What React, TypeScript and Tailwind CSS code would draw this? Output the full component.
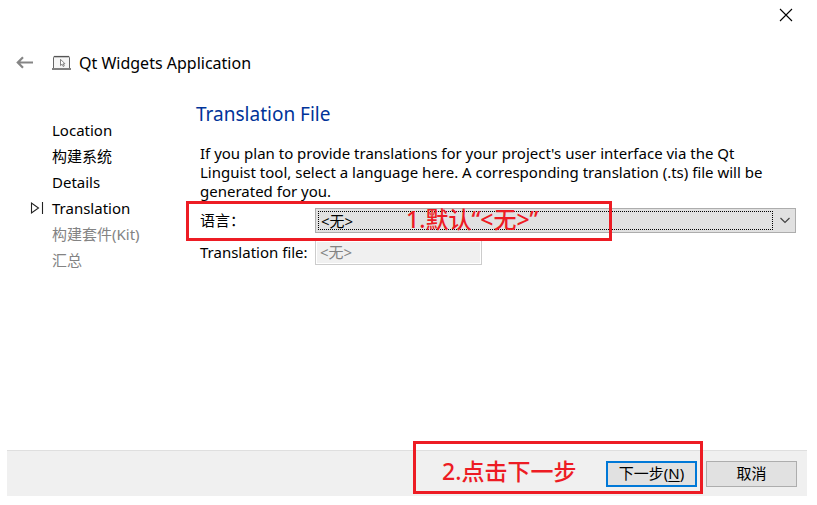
import React from "react";

type StepState = "done" | "current" | "pending";

const steps: { label: string; state: StepState }[] = [
  { label: "Location", state: "done" },
  { label: "构建系统", state: "done" },
  { label: "Details", state: "done" },
  { label: "Translation", state: "current" },
  { label: "构建套件(Kit)", state: "pending" },
  { label: "汇总", state: "pending" },
];

function Header() {
  return (
    <header>
      <div className="flex h-[30px] items-center justify-end pr-[14px]">
        <button type="button" aria-label="关闭" className="flex h-[14px] w-[14px] items-center justify-center">
          <svg width="14" height="14" viewBox="0 0 14 14" fill="none" stroke="#000" strokeWidth="1.1">
            <path d="M1 1 13 13M13 1 1 13" />
          </svg>
        </button>
      </div>
      <div className="mt-[23px] flex h-5 items-center pl-[9px]">
        <button type="button" aria-label="返回" className="h-5 w-5">
          <svg width="20" height="20" viewBox="0 0 20 20" fill="none" stroke="#858585" strokeWidth="2.2">
            <path d="M17 9.5H2M7 4.3 1.8 9.5 7 14.7" />
          </svg>
        </button>
        <svg className="ml-4" width="20" height="20" viewBox="0 0 20 20" fill="none">
          <path d="M1.5 15V4.5Q1.5 3.5 2.5 3.5H16.5Q17.5 3.5 17.5 4.5V15" fill="#f6f6f6" stroke="#666" />
          <path d="M2 3.6H17" stroke="#555" strokeWidth="1.4" />
          <path d="M0 16H19" stroke="#808080" strokeWidth="2" />
          <path d="M8.5 6.3V12.6L10.1 11.2 11.3 13.6 12.3 13 11.2 10.8H13Z" fill="#fff" stroke="#777" strokeWidth=".9" />
        </svg>
        <h1 className="ml-[7px] text-base leading-5">Qt Widgets Application</h1>
      </div>
    </header>
  );
}

function StepList() {
  return (
    <nav className="w-[189px] shrink-0 pt-11">
      <ol>
        {steps.map((step) => (
          <li
            key={step.label}
            aria-current={step.state === "current" ? "step" : undefined}
            className={step.state === "pending" ? "flex h-[26px] items-center text-[#838383]" : "flex h-[26px] items-center"}
          >
            <span className="flex w-[45px] pl-[23px]">
              {step.state === "current" && (
                <svg width="14" height="14" viewBox="0 0 14 14" fill="none" stroke="#222">
                  <path d="M1.5 2V12L8.5 7ZM12.5 1V13" strokeWidth="1.1" />
                </svg>
              )}
            </span>
            {step.label}
          </li>
        ))}
      </ol>
    </nav>
  );
}

function TranslationPage() {
  return (
    <section className="min-w-0 flex-1 pr-[11px] pt-[28px]">
      <h2 className="text-[19px] leading-[26px] text-[#003399]">Translation File</h2>
      <div className="pl-1 pt-[17px]">
        <p className="pr-3 leading-[19px]">
          If you plan to provide translations for your project's user interface via the Qt Linguist tool, select a
          language here. A corresponding translation (.ts) file will be generated for you.
        </p>
        <div className="relative mt-[7px] flex items-center">
          <label htmlFor="language" className="w-[115px] shrink-0">
            语言：
          </label>
          <div className="relative flex-1">
            <select
              id="language"
              className="block h-[25px] w-full appearance-none border border-[#adadad] bg-[#e1e1e1] pl-[5px] text-[15px] leading-5 outline-none"
            >
              <option>&lt;无&gt;</option>
            </select>
            <span className="pointer-events-none absolute bottom-[3px] left-[3px] right-[23px] top-[3px] border border-dotted border-black" />
            <svg
              className="pointer-events-none absolute right-[6px] top-[9px]"
              width="10"
              height="7"
              viewBox="0 0 10 7"
              fill="none"
              stroke="#444"
              strokeWidth="1.2"
            >
              <path d="M.5 1 5 5.5 9.5 1" />
            </svg>
          </div>
          <div className="pointer-events-none absolute -left-[14px] -top-[7px] z-10 h-10 w-[426px] border-[3px] border-[#ed1c24] pl-[217px] text-[23px] font-medium leading-[30px] text-[#ed1c24]">
            1.默认“&lt;无&gt;”
          </div>
        </div>
        <div className="mt-[7px] flex items-center">
          <label htmlFor="file" className="w-[115px] shrink-0">
            Translation file:
          </label>
          <input
            id="file"
            disabled
            value="<无>"
            readOnly
            className="h-[25px] w-[167px] border border-[#ccc] bg-[#f0f0f0] px-1 pb-0.5 text-[#838383] shadow-[inset_0_0_0_1px_#fff]"
          />
        </div>
      </div>
    </section>
  );
}

function Footer() {
  return (
    <footer className="relative flex h-[46px] items-center justify-end gap-[9px] border-t border-[#dfdfdf] bg-[#f0f0f0] pr-[10px]">
      <button type="button" className="h-[26px] w-[91px] border-2 border-[#0078d7] bg-[#e1e1e1] pb-0.5 leading-5">
        下一步(<u className="underline-offset-2">N</u>)
      </button>
      <button type="button" className="h-[26px] w-[91px] border border-[#adadad] bg-[#e1e1e1] pb-0.5 leading-5">
        取消
      </button>
      <div className="pointer-events-none absolute -top-[10px] right-[104px] h-[53px] w-[290px] border-[3px] border-[#ed1c24] pl-[26px] pt-3 text-[23px] font-medium leading-[30px] text-[#ed1c24]">
        2.点击下一步
      </div>
    </footer>
  );
}

export default function App() {
  return (
    <div className="flex min-h-screen flex-col bg-white pb-[9px] pl-[7px] pr-[10px] font-['Noto_Sans','Noto_Sans_CJK_SC',sans-serif] text-[15px] text-black">
      <Header />
      <main className="flex flex-1">
        <StepList />
        <TranslationPage />
      </main>
      <Footer />
    </div>
  );
}
